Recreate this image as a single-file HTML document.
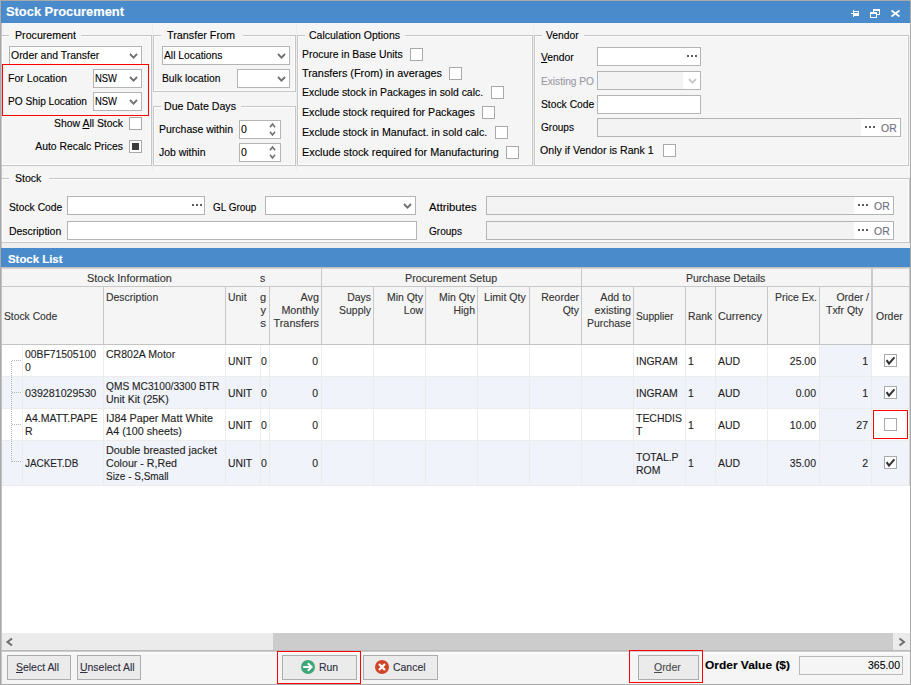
<!DOCTYPE html>
<html><head><meta charset="utf-8"><title>Stock Procurement</title>
<style>
html,body{margin:0;padding:0;width:911px;height:685px;overflow:hidden;background:#f5f5f5;}
body{position:relative;font-family:"Liberation Sans",sans-serif;font-size:11px;color:#000;}
body>div,body>span,body>svg,div>span{position:absolute;box-sizing:border-box;}
.t{white-space:nowrap;-webkit-text-stroke:0.12px currentColor;}
u{text-decoration:underline;text-underline-offset:1px;}
</style></head><body>
<div style="left:0px;top:0px;width:911px;height:685px;background:#f5f5f5;border:1px solid #a9a9a9;"></div>
<div style="left:1px;top:1px;width:1px;height:683px;background:#c4c4c4;"></div>
<div style="left:1px;top:1px;width:909px;height:22px;background:#4a8ccb;"></div>
<span class="t" style="top:5px;font-size:13px;line-height:13px;font-weight:bold;color:#fff;left:6.3px;transform-origin:0 50%;transform:scaleX(0.990);">Stock Procurement</span>
<svg style="left:848px;top:6px" width="60" height="16"><g fill="#fff"><rect x="3" y="7" width="2" height="1"/><rect x="5" y="4" width="1" height="7"/><rect x="6" y="5" width="5" height="5"/></g><rect x="6" y="6" width="4" height="1" fill="#4a8ccb"/><rect x="25" y="3" width="7" height="6" fill="#fff"/><rect x="26" y="5" width="5" height="3" fill="#4a8ccb"/><rect x="22" y="6" width="7" height="6" fill="#fff"/><rect x="23" y="8" width="5" height="3" fill="#4a8ccb"/><path d="M43.5,4.5 L51.5,10.5 M51.5,4.5 L43.5,10.5" stroke="#fff" stroke-width="1.7" fill="none"/></svg>
<div style="left:152px;top:23px;width:1px;height:148px;background:#eeeeee;"></div>
<div style="left:296px;top:23px;width:1px;height:148px;background:#eeeeee;"></div>
<div style="left:533px;top:23px;width:1px;height:148px;background:#eeeeee;"></div>
<div style="left:1px;top:35px;width:151px;height:131px;border:1px solid #c6c6c6;"></div>
<div style="left:2px;top:36px;width:149px;height:129px;border:1px solid #fcfcfc;"></div>
<div style="left:9px;top:32px;width:72px;height:7px;background:#f5f5f5;"></div>
<span class="t" style="top:29px;font-size:11px;line-height:13px;left:15px;transform-origin:0 50%;transform:scaleX(0.968);">Procurement</span>
<div style="left:153px;top:35px;width:143px;height:57px;border:1px solid #c6c6c6;"></div>
<div style="left:154px;top:36px;width:141px;height:55px;border:1px solid #fcfcfc;"></div>
<div style="left:161px;top:32px;width:82px;height:7px;background:#f5f5f5;"></div>
<span class="t" style="top:29px;font-size:11px;line-height:13px;left:167px;transform-origin:0 50%;transform:scaleX(0.982);">Transfer From</span>
<div style="left:153px;top:106px;width:143px;height:60px;border:1px solid #c6c6c6;"></div>
<div style="left:154px;top:107px;width:141px;height:58px;border:1px solid #fcfcfc;"></div>
<div style="left:161px;top:103px;width:80px;height:7px;background:#f5f5f5;"></div>
<span class="t" style="top:100px;font-size:11px;line-height:13px;left:164px;transform-origin:0 50%;transform:scaleX(0.965);">Due Date Days</span>
<div style="left:297px;top:35px;width:236px;height:131px;border:1px solid #c6c6c6;"></div>
<div style="left:298px;top:36px;width:234px;height:129px;border:1px solid #fcfcfc;"></div>
<div style="left:305px;top:32px;width:100px;height:7px;background:#f5f5f5;"></div>
<span class="t" style="top:29px;font-size:11px;line-height:13px;left:309px;transform-origin:0 50%;transform:scaleX(0.954);">Calculation Options</span>
<div style="left:534px;top:35px;width:375px;height:131px;border:1px solid #c6c6c6;"></div>
<div style="left:535px;top:36px;width:373px;height:129px;border:1px solid #fcfcfc;"></div>
<div style="left:542px;top:32px;width:42px;height:7px;background:#f5f5f5;"></div>
<span class="t" style="top:29px;font-size:11px;line-height:13px;left:546px;transform-origin:0 50%;transform:scaleX(0.934);">Vendor</span>
<div style="left:1px;top:178px;width:909px;height:65px;border:1px solid #c6c6c6;"></div>
<div style="left:2px;top:179px;width:907px;height:63px;border:1px solid #fcfcfc;"></div>
<div style="left:9px;top:175px;width:40px;height:7px;background:#f5f5f5;"></div>
<span class="t" style="top:172px;font-size:11px;line-height:13px;left:15px;transform-origin:0 50%;transform:scaleX(0.959);">Stock</span>
<div style="left:9px;top:46px;width:133px;height:19px;border:1px solid #b4b4b4;background:#fff;"></div>
<span class="t" style="top:49px;font-size:11px;line-height:13px;left:11px;transform-origin:0 50%;transform:scaleX(0.950);">Order and Transfer</span>
<svg style="left:129px;top:53px" width="9" height="7"><polyline points="1,1 4.5,4.6 8,1" fill="none" stroke="#6f6f6f" stroke-width="1.8"/></svg>
<span class="t" style="top:72px;font-size:11px;line-height:13px;left:8px;transform-origin:0 50%;transform:scaleX(0.964);">For Location</span>
<div style="left:93px;top:69px;width:49px;height:19px;border:1px solid #b4b4b4;background:#fff;"></div>
<span class="t" style="top:72px;font-size:11px;line-height:13px;left:95px;transform-origin:0 50%;transform:scaleX(0.857);">NSW</span>
<svg style="left:129px;top:76px" width="9" height="7"><polyline points="1,1 4.5,4.6 8,1" fill="none" stroke="#6f6f6f" stroke-width="1.8"/></svg>
<span class="t" style="top:95px;font-size:11px;line-height:13px;left:8px;transform-origin:0 50%;transform:scaleX(0.922);">PO Ship Location</span>
<div style="left:93px;top:92px;width:49px;height:19px;border:1px solid #b4b4b4;background:#fff;"></div>
<span class="t" style="top:95px;font-size:11px;line-height:13px;left:95px;transform-origin:0 50%;transform:scaleX(0.857);">NSW</span>
<svg style="left:129px;top:99px" width="9" height="7"><polyline points="1,1 4.5,4.6 8,1" fill="none" stroke="#6f6f6f" stroke-width="1.8"/></svg>
<div style="left:2px;top:64px;width:147px;height:52px;border:1px solid #ff0000;"></div>
<span class="t" style="top:117px;font-size:11px;line-height:13px;left:-277px;width:400px;text-align:right;transform-origin:100% 50%;transform:scaleX(0.948);">Show <u>A</u>ll Stock</span>
<div style="left:129px;top:117px;width:13px;height:13px;border:1px solid #a9a9a9;background:#fff;"></div>
<span class="t" style="top:140px;font-size:11px;line-height:13px;left:-277px;width:400px;text-align:right;transform-origin:100% 50%;transform:scaleX(0.944);">Auto Recalc Prices</span>
<div style="left:129px;top:140px;width:13px;height:13px;border:1px solid #a9a9a9;background:#fff;"></div>
<div style="left:132px;top:143px;width:7px;height:7px;background:#3c3c3c;"></div>
<div style="left:162px;top:46px;width:128px;height:19px;border:1px solid #b4b4b4;background:#fff;"></div>
<span class="t" style="top:49px;font-size:11px;line-height:13px;left:164px;transform-origin:0 50%;transform:scaleX(0.937);">All Locations</span>
<svg style="left:277px;top:53px" width="9" height="7"><polyline points="1,1 4.5,4.6 8,1" fill="none" stroke="#6f6f6f" stroke-width="1.8"/></svg>
<span class="t" style="top:72px;font-size:11px;line-height:13px;left:162px;transform-origin:0 50%;transform:scaleX(0.937);">Bulk location</span>
<div style="left:237px;top:69px;width:53px;height:19px;border:1px solid #b4b4b4;background:#fff;"></div>
<svg style="left:277px;top:76px" width="9" height="7"><polyline points="1,1 4.5,4.6 8,1" fill="none" stroke="#6f6f6f" stroke-width="1.8"/></svg>
<span class="t" style="top:123px;font-size:11px;line-height:13px;left:159px;transform-origin:0 50%;transform:scaleX(0.953);">Purchase within</span>
<span class="t" style="top:146px;font-size:11px;line-height:13px;left:159px;transform-origin:0 50%;transform:scaleX(0.950);">Job within</span>
<div style="left:239px;top:120px;width:42px;height:19px;border:1px solid #b4b4b4;background:#fff;"></div>
<span class="t" style="top:123px;font-size:11px;line-height:13px;left:241px;transform-origin:0 50%;transform:scaleX(0.950);">0</span>
<svg style="left:268px;top:122px" width="9" height="15"><polyline points="2,5.2 4.5,2 7,5.2" fill="none" stroke="#6f6f6f" stroke-width="1.6"/><polyline points="2,9.8 4.5,13 7,9.8" fill="none" stroke="#6f6f6f" stroke-width="1.6"/></svg>
<div style="left:239px;top:143px;width:42px;height:19px;border:1px solid #b4b4b4;background:#fff;"></div>
<span class="t" style="top:146px;font-size:11px;line-height:13px;left:241px;transform-origin:0 50%;transform:scaleX(0.950);">0</span>
<svg style="left:268px;top:145px" width="9" height="15"><polyline points="2,5.2 4.5,2 7,5.2" fill="none" stroke="#6f6f6f" stroke-width="1.6"/><polyline points="2,9.8 4.5,13 7,9.8" fill="none" stroke="#6f6f6f" stroke-width="1.6"/></svg>
<span class="t" style="top:48px;font-size:11px;line-height:13px;left:302px;transform-origin:0 50%;transform:scaleX(0.946);">Procure in Base Units</span>
<div style="left:410px;top:48px;width:13px;height:13px;border:1px solid #a9a9a9;background:#fff;"></div>
<span class="t" style="top:67px;font-size:11px;line-height:13px;left:302px;transform-origin:0 50%;transform:scaleX(0.985);">Transfers (From) in averages</span>
<div style="left:449px;top:67px;width:13px;height:13px;border:1px solid #a9a9a9;background:#fff;"></div>
<span class="t" style="top:86px;font-size:11px;line-height:13px;left:302px;transform-origin:0 50%;transform:scaleX(0.946);">Exclude stock in Packages in sold calc.</span>
<div style="left:491px;top:86px;width:13px;height:13px;border:1px solid #a9a9a9;background:#fff;"></div>
<span class="t" style="top:106px;font-size:11px;line-height:13px;left:302px;transform-origin:0 50%;transform:scaleX(0.968);">Exclude stock required for Packages</span>
<div style="left:482px;top:106px;width:13px;height:13px;border:1px solid #a9a9a9;background:#fff;"></div>
<span class="t" style="top:126px;font-size:11px;line-height:13px;left:302px;transform-origin:0 50%;transform:scaleX(0.968);">Exclude stock in Manufact. in sold calc.</span>
<div style="left:495px;top:126px;width:13px;height:13px;border:1px solid #a9a9a9;background:#fff;"></div>
<span class="t" style="top:146px;font-size:11px;line-height:13px;left:302px;transform-origin:0 50%;transform:scaleX(0.984);">Exclude stock required for Manufacturing</span>
<div style="left:506px;top:146px;width:13px;height:13px;border:1px solid #a9a9a9;background:#fff;"></div>
<span class="t" style="top:51px;font-size:11px;line-height:13px;left:541px;transform-origin:0 50%;transform:scaleX(0.937);"><u>V</u>endor</span>
<div style="left:597px;top:47px;width:104px;height:19px;border:1px solid #b4b4b4;background:#fff;"></div>
<div style="left:687px;top:55px;width:2px;height:2px;background:#5c5c5c;"></div>
<div style="left:691px;top:55px;width:2px;height:2px;background:#5c5c5c;"></div>
<div style="left:695px;top:55px;width:2px;height:2px;background:#5c5c5c;"></div>
<span class="t" style="top:75px;font-size:11px;line-height:13px;color:#9a9aa4;left:541px;transform-origin:0 50%;transform:scaleX(0.922);">Existing PO</span>
<div style="left:597px;top:71px;width:104px;height:19px;border:1px solid #b4b4b4;background:#f3f3f3;"></div>
<div style="left:683px;top:72px;width:17px;height:17px;background:#fff;"></div>
<svg style="left:688px;top:78px" width="9" height="7"><polyline points="1,1 4.5,4.6 8,1" fill="none" stroke="#c8c8c8" stroke-width="1.8"/></svg>
<span class="t" style="top:98px;font-size:11px;line-height:13px;left:541px;transform-origin:0 50%;transform:scaleX(0.937);">Stock Code</span>
<div style="left:597px;top:95px;width:104px;height:19px;border:1px solid #b4b4b4;background:#fff;"></div>
<span class="t" style="top:121px;font-size:11px;line-height:13px;left:541px;transform-origin:0 50%;transform:scaleX(0.914);">Groups</span>
<div style="left:597px;top:118px;width:304px;height:19px;border:1px solid #b4b4b4;background:#f3f3f3;"></div>
<div style="left:861px;top:119px;width:39px;height:17px;background:#fff;"></div>
<div style="left:865px;top:126px;width:2px;height:2px;background:#5c5c5c;"></div>
<div style="left:869px;top:126px;width:2px;height:2px;background:#5c5c5c;"></div>
<div style="left:873px;top:126px;width:2px;height:2px;background:#5c5c5c;"></div>
<span class="t" style="top:122px;font-size:11px;line-height:13px;color:#6d6d80;left:881px;transform-origin:0 50%;transform:scaleX(0.950);">OR</span>
<span class="t" style="top:144px;font-size:11px;line-height:13px;left:540px;transform-origin:0 50%;transform:scaleX(0.963);">Only if Vendor is Rank 1</span>
<div style="left:663px;top:144px;width:13px;height:13px;border:1px solid #a9a9a9;background:#fff;"></div>
<span class="t" style="top:201px;font-size:11px;line-height:13px;left:9px;transform-origin:0 50%;transform:scaleX(0.937);">Stock Code</span>
<div style="left:67px;top:196px;width:138px;height:19px;border:1px solid #b4b4b4;background:#fff;"></div>
<div style="left:192px;top:204px;width:2px;height:2px;background:#5c5c5c;"></div>
<div style="left:196px;top:204px;width:2px;height:2px;background:#5c5c5c;"></div>
<div style="left:200px;top:204px;width:2px;height:2px;background:#5c5c5c;"></div>
<span class="t" style="top:201px;font-size:11px;line-height:13px;left:213px;transform-origin:0 50%;transform:scaleX(0.905);">GL Group</span>
<div style="left:265px;top:196px;width:151px;height:19px;border:1px solid #b4b4b4;background:#fff;"></div>
<svg style="left:403px;top:203px" width="9" height="7"><polyline points="1,1 4.5,4.6 8,1" fill="none" stroke="#6f6f6f" stroke-width="1.8"/></svg>
<span class="t" style="top:201px;font-size:11px;line-height:13px;left:429px;transform-origin:0 50%;transform:scaleX(1.024);">Attributes</span>
<div style="left:486px;top:196px;width:408px;height:19px;border:1px solid #b4b4b4;background:#f3f3f3;"></div>
<div style="left:854px;top:197px;width:39px;height:17px;background:#fff;"></div>
<div style="left:858px;top:204px;width:2px;height:2px;background:#5c5c5c;"></div>
<div style="left:862px;top:204px;width:2px;height:2px;background:#5c5c5c;"></div>
<div style="left:866px;top:204px;width:2px;height:2px;background:#5c5c5c;"></div>
<span class="t" style="top:200px;font-size:11px;line-height:13px;color:#6d6d80;left:874px;transform-origin:0 50%;transform:scaleX(0.950);">OR</span>
<span class="t" style="top:225px;font-size:11px;line-height:13px;left:9px;transform-origin:0 50%;transform:scaleX(0.949);">Description</span>
<div style="left:67px;top:221px;width:350px;height:19px;border:1px solid #b4b4b4;background:#fff;"></div>
<span class="t" style="top:225px;font-size:11px;line-height:13px;left:429px;transform-origin:0 50%;transform:scaleX(0.914);">Groups</span>
<div style="left:486px;top:221px;width:408px;height:19px;border:1px solid #b4b4b4;background:#f3f3f3;"></div>
<div style="left:854px;top:222px;width:39px;height:17px;background:#fff;"></div>
<div style="left:858px;top:229px;width:2px;height:2px;background:#5c5c5c;"></div>
<div style="left:862px;top:229px;width:2px;height:2px;background:#5c5c5c;"></div>
<div style="left:866px;top:229px;width:2px;height:2px;background:#5c5c5c;"></div>
<span class="t" style="top:225px;font-size:11px;line-height:13px;color:#6d6d80;left:874px;transform-origin:0 50%;transform:scaleX(0.950);">OR</span>
<div style="left:2px;top:243px;width:908px;height:5px;background:#efefef;"></div>
<div style="left:1px;top:248px;width:909px;height:19px;background:#4a8ccb;"></div>
<span class="t" style="top:253px;font-size:11px;line-height:13px;font-weight:bold;color:#fff;left:7.5px;transform-origin:0 50%;transform:scaleX(1.036);">Stock List</span>
<div style="left:1px;top:268px;width:909px;height:77px;background:#f5f5f5;"></div>
<div style="left:1px;top:267px;width:909px;height:1px;background:#c4c1be;"></div>
<div style="left:1px;top:268px;width:909px;height:1px;background:#d4d4d4;"></div>
<div style="left:2px;top:286px;width:908px;height:1px;background:#c8c8c8;"></div>
<div style="left:2px;top:344px;width:908px;height:1px;background:#c4c4c4;"></div>
<div style="left:2px;top:345px;width:908px;height:288px;background:#fff;"></div>
<div style="left:820px;top:345px;width:52px;height:31px;background:#f0f3f9;"></div>
<div style="left:2px;top:376px;width:908px;height:1px;background:#ececec;"></div>
<div style="left:2px;top:377px;width:908px;height:31px;background:#f0f3f9;"></div>
<div style="left:2px;top:408px;width:908px;height:1px;background:#ececec;"></div>
<div style="left:820px;top:409px;width:52px;height:31px;background:#f0f3f9;"></div>
<div style="left:2px;top:440px;width:908px;height:1px;background:#ececec;"></div>
<div style="left:2px;top:441px;width:908px;height:44px;background:#f0f3f9;"></div>
<div style="left:2px;top:485px;width:908px;height:1px;background:#ececec;"></div>
<div style="left:103px;top:287px;width:1px;height:57px;background:#c8c8c8;"></div>
<div style="left:103px;top:345px;width:1px;height:140px;background:#ececec;"></div>
<div style="left:225px;top:287px;width:1px;height:57px;background:#c8c8c8;"></div>
<div style="left:225px;top:345px;width:1px;height:140px;background:#ececec;"></div>
<div style="left:260px;top:345px;width:1px;height:140px;background:#ececec;"></div>
<div style="left:269px;top:287px;width:1px;height:57px;background:#c8c8c8;"></div>
<div style="left:269px;top:345px;width:1px;height:140px;background:#ececec;"></div>
<div style="left:321px;top:287px;width:1px;height:57px;background:#c8c8c8;"></div>
<div style="left:321px;top:345px;width:1px;height:140px;background:#ececec;"></div>
<div style="left:373px;top:287px;width:1px;height:57px;background:#c8c8c8;"></div>
<div style="left:373px;top:345px;width:1px;height:140px;background:#ececec;"></div>
<div style="left:425px;top:287px;width:1px;height:57px;background:#c8c8c8;"></div>
<div style="left:425px;top:345px;width:1px;height:140px;background:#ececec;"></div>
<div style="left:477px;top:287px;width:1px;height:57px;background:#c8c8c8;"></div>
<div style="left:477px;top:345px;width:1px;height:140px;background:#ececec;"></div>
<div style="left:529px;top:287px;width:1px;height:57px;background:#c8c8c8;"></div>
<div style="left:529px;top:345px;width:1px;height:140px;background:#ececec;"></div>
<div style="left:581px;top:287px;width:1px;height:57px;background:#c8c8c8;"></div>
<div style="left:581px;top:345px;width:1px;height:140px;background:#ececec;"></div>
<div style="left:633px;top:287px;width:1px;height:57px;background:#c8c8c8;"></div>
<div style="left:633px;top:345px;width:1px;height:140px;background:#ececec;"></div>
<div style="left:685px;top:287px;width:1px;height:57px;background:#c8c8c8;"></div>
<div style="left:685px;top:345px;width:1px;height:140px;background:#ececec;"></div>
<div style="left:715px;top:287px;width:1px;height:57px;background:#c8c8c8;"></div>
<div style="left:715px;top:345px;width:1px;height:140px;background:#ececec;"></div>
<div style="left:767px;top:287px;width:1px;height:57px;background:#c8c8c8;"></div>
<div style="left:767px;top:345px;width:1px;height:140px;background:#ececec;"></div>
<div style="left:819px;top:287px;width:1px;height:57px;background:#c8c8c8;"></div>
<div style="left:819px;top:345px;width:1px;height:140px;background:#ececec;"></div>
<div style="left:871px;top:287px;width:1px;height:57px;background:#c8c8c8;"></div>
<div style="left:871px;top:345px;width:1px;height:140px;background:#ececec;"></div>
<div style="left:22px;top:345px;width:1px;height:140px;background:#ececec;"></div>
<div style="left:871px;top:268px;width:2px;height:76px;background:#cacaca;"></div>
<div style="left:321px;top:268px;width:1px;height:18px;background:#c8c8c8;"></div>
<div style="left:581px;top:268px;width:1px;height:18px;background:#c8c8c8;"></div>
<div style="left:909px;top:268px;width:1px;height:76px;background:#c8c8c8;"></div>
<div style="left:909px;top:345px;width:1px;height:141px;background:#d8d8d8;"></div>
<div style="left:1px;top:268px;width:1px;height:383px;background:#c4c4c4;"></div>
<span class="t" style="top:272px;font-size:11px;line-height:13px;color:#333;left:87px;transform-origin:0 50%;transform:scaleX(0.992);">Stock Information</span>
<span class="t" style="top:272px;font-size:11px;line-height:13px;color:#333;left:260px;transform-origin:0 50%;transform:scaleX(0.950);">s</span>
<span class="t" style="top:272px;font-size:11px;line-height:13px;color:#333;left:405px;transform-origin:0 50%;transform:scaleX(0.972);">Procurement Setup</span>
<span class="t" style="top:272px;font-size:11px;line-height:13px;color:#333;left:686px;transform-origin:0 50%;transform:scaleX(0.954);">Purchase Details</span>
<span class="t" style="top:310px;font-size:11px;line-height:13px;color:#333;left:4px;transform-origin:0 50%;transform:scaleX(0.937);">Stock Code</span>
<span class="t" style="top:291px;font-size:11px;line-height:13px;color:#333;left:106px;transform-origin:0 50%;transform:scaleX(0.949);">Description</span>
<span class="t" style="top:291px;font-size:11px;line-height:13px;color:#333;left:228px;transform-origin:0 50%;transform:scaleX(0.950);">Unit</span>
<div style="left:260px;top:287px;width:9px;height:57px;overflow:hidden;"><span class="t" style="left:-100px;width:106px;text-align:right;top:4px;line-height:13px;color:#333">g<br>y<br>es</span></div>
<span class="t" style="top:291px;font-size:11px;line-height:13px;color:#333;left:-81px;width:400px;text-align:right;transform-origin:100% 50%;transform:scaleX(0.981);">Avg</span>
<span class="t" style="top:304px;font-size:11px;line-height:13px;color:#333;left:-81px;width:400px;text-align:right;transform-origin:100% 50%;transform:scaleX(0.976);">Monthly</span>
<span class="t" style="top:317px;font-size:11px;line-height:13px;color:#333;left:-81px;width:400px;text-align:right;transform-origin:100% 50%;transform:scaleX(0.988);">Transfers</span>
<span class="t" style="top:291px;font-size:11px;line-height:13px;color:#333;left:-29px;width:400px;text-align:right;transform-origin:100% 50%;transform:scaleX(0.950);">Days</span>
<span class="t" style="top:304px;font-size:11px;line-height:13px;color:#333;left:-29px;width:400px;text-align:right;transform-origin:100% 50%;transform:scaleX(0.950);">Supply</span>
<span class="t" style="top:291px;font-size:11px;line-height:13px;color:#333;left:23px;width:400px;text-align:right;transform-origin:100% 50%;transform:scaleX(0.950);">Min Qty</span>
<span class="t" style="top:304px;font-size:11px;line-height:13px;color:#333;left:23px;width:400px;text-align:right;transform-origin:100% 50%;transform:scaleX(0.950);">Low</span>
<span class="t" style="top:291px;font-size:11px;line-height:13px;color:#333;left:75px;width:400px;text-align:right;transform-origin:100% 50%;transform:scaleX(0.950);">Min Qty</span>
<span class="t" style="top:304px;font-size:11px;line-height:13px;color:#333;left:75px;width:400px;text-align:right;transform-origin:100% 50%;transform:scaleX(0.950);">High</span>
<span class="t" style="top:291px;font-size:11px;line-height:13px;color:#333;left:179px;width:400px;text-align:right;transform-origin:100% 50%;transform:scaleX(0.950);">Reorder</span>
<span class="t" style="top:304px;font-size:11px;line-height:13px;color:#333;left:179px;width:400px;text-align:right;transform-origin:100% 50%;transform:scaleX(0.950);">Qty</span>
<span class="t" style="top:291px;font-size:11px;line-height:13px;color:#333;left:231px;width:400px;text-align:right;transform-origin:100% 50%;transform:scaleX(0.964);">Add to</span>
<span class="t" style="top:304px;font-size:11px;line-height:13px;color:#333;left:231px;width:400px;text-align:right;transform-origin:100% 50%;transform:scaleX(0.976);">existing</span>
<span class="t" style="top:317px;font-size:11px;line-height:13px;color:#333;left:231px;width:400px;text-align:right;transform-origin:100% 50%;transform:scaleX(0.944);">Purchase</span>
<span class="t" style="top:291px;font-size:11px;line-height:13px;color:#333;left:484px;transform-origin:0 50%;transform:scaleX(0.961);">Limit Qty</span>
<span class="t" style="top:310px;font-size:11px;line-height:13px;color:#333;left:636px;transform-origin:0 50%;transform:scaleX(0.926);">Supplier</span>
<span class="t" style="top:310px;font-size:11px;line-height:13px;color:#333;left:688px;transform-origin:0 50%;transform:scaleX(0.942);">Rank</span>
<span class="t" style="top:310px;font-size:11px;line-height:13px;color:#333;left:718px;transform-origin:0 50%;transform:scaleX(0.984);">Currency</span>
<span class="t" style="top:291px;font-size:11px;line-height:13px;color:#333;left:775px;transform-origin:0 50%;transform:scaleX(0.950);">Price Ex.</span>
<span class="t" style="top:291px;font-size:11px;line-height:13px;color:#333;left:469px;width:400px;text-align:right;transform-origin:100% 50%;transform:scaleX(0.950);">Order /</span>
<span class="t" style="top:304px;font-size:11px;line-height:13px;color:#333;left:826px;transform-origin:0 50%;transform:scaleX(0.950);">Txfr Qty</span>
<span class="t" style="top:310px;font-size:11px;line-height:13px;color:#333;left:876px;transform-origin:0 50%;transform:scaleX(0.950);">Order</span>
<svg style="left:0;top:345px" width="24" height="140" shape-rendering="crispEdges"><g stroke="#b4b4b4" stroke-width="1" stroke-dasharray="1,1" fill="none"><path d="M11.5,16 V117 M11.5,15.5 H21 M11.5,47.5 H21 M11.5,79.5 H21 M11.5,116.5 H21"/></g></svg>
<span class="t" style="top:348px;font-size:11px;line-height:13px;color:#1e1e1e;left:25px;transform-origin:0 50%;transform:scaleX(0.943);">00BF71505100</span>
<span class="t" style="top:361px;font-size:11px;line-height:13px;color:#1e1e1e;left:25px;transform-origin:0 50%;transform:scaleX(0.950);">0</span>
<span class="t" style="top:348px;font-size:11px;line-height:13px;color:#1e1e1e;left:105.5px;transform-origin:0 50%;transform:scaleX(0.959);">CR802A Motor</span>
<span class="t" style="top:355px;font-size:11px;line-height:13px;color:#1e1e1e;left:228px;transform-origin:0 50%;transform:scaleX(0.943);">UNIT</span>
<span class="t" style="top:355px;font-size:11px;line-height:13px;color:#1e1e1e;left:261px;transform-origin:0 50%;transform:scaleX(0.950);">0</span>
<span class="t" style="top:355px;font-size:11px;line-height:13px;color:#1e1e1e;left:-82px;width:400px;text-align:right;transform-origin:100% 50%;transform:scaleX(0.950);">0</span>
<span class="t" style="top:355px;font-size:11px;line-height:13px;color:#1e1e1e;left:636px;transform-origin:0 50%;transform:scaleX(0.950);">INGRAM</span>
<span class="t" style="top:355px;font-size:11px;line-height:13px;color:#1e1e1e;left:688px;transform-origin:0 50%;transform:scaleX(0.950);">1</span>
<span class="t" style="top:355px;font-size:11px;line-height:13px;color:#1e1e1e;left:718px;transform-origin:0 50%;transform:scaleX(0.950);">AUD</span>
<span class="t" style="top:355px;font-size:11px;line-height:13px;color:#1e1e1e;left:416px;width:400px;text-align:right;transform-origin:100% 50%;transform:scaleX(0.950);">25.00</span>
<span class="t" style="top:355px;font-size:11px;line-height:13px;color:#1e1e1e;left:468px;width:400px;text-align:right;transform-origin:100% 50%;transform:scaleX(0.950);">1</span>
<div style="left:884px;top:354px;width:13px;height:13px;border:1px solid #a9a9a9;background:#fff;"></div>
<svg style="left:884px;top:354px" width="13" height="13"><polyline points="2.6,6.2 5,9.6 10.4,3.4" fill="none" stroke="#333" stroke-width="2.1"/></svg>
<span class="t" style="top:387px;font-size:11px;line-height:13px;color:#1e1e1e;left:25px;transform-origin:0 50%;transform:scaleX(0.971);">039281029530</span>
<span class="t" style="top:380px;font-size:11px;line-height:13px;color:#1e1e1e;left:105.5px;transform-origin:0 50%;transform:scaleX(0.927);">QMS MC3100/3300 BTR</span>
<span class="t" style="top:393px;font-size:11px;line-height:13px;color:#1e1e1e;left:105.5px;transform-origin:0 50%;transform:scaleX(0.958);">Unit Kit (25K)</span>
<span class="t" style="top:387px;font-size:11px;line-height:13px;color:#1e1e1e;left:228px;transform-origin:0 50%;transform:scaleX(0.943);">UNIT</span>
<span class="t" style="top:387px;font-size:11px;line-height:13px;color:#1e1e1e;left:261px;transform-origin:0 50%;transform:scaleX(0.950);">0</span>
<span class="t" style="top:387px;font-size:11px;line-height:13px;color:#1e1e1e;left:-82px;width:400px;text-align:right;transform-origin:100% 50%;transform:scaleX(0.950);">0</span>
<span class="t" style="top:387px;font-size:11px;line-height:13px;color:#1e1e1e;left:636px;transform-origin:0 50%;transform:scaleX(0.950);">INGRAM</span>
<span class="t" style="top:387px;font-size:11px;line-height:13px;color:#1e1e1e;left:688px;transform-origin:0 50%;transform:scaleX(0.950);">1</span>
<span class="t" style="top:387px;font-size:11px;line-height:13px;color:#1e1e1e;left:718px;transform-origin:0 50%;transform:scaleX(0.950);">AUD</span>
<span class="t" style="top:387px;font-size:11px;line-height:13px;color:#1e1e1e;left:416px;width:400px;text-align:right;transform-origin:100% 50%;transform:scaleX(0.950);">0.00</span>
<span class="t" style="top:387px;font-size:11px;line-height:13px;color:#1e1e1e;left:468px;width:400px;text-align:right;transform-origin:100% 50%;transform:scaleX(0.950);">1</span>
<div style="left:884px;top:386px;width:13px;height:13px;border:1px solid #a9a9a9;background:#fff;"></div>
<svg style="left:884px;top:386px" width="13" height="13"><polyline points="2.6,6.2 5,9.6 10.4,3.4" fill="none" stroke="#333" stroke-width="2.1"/></svg>
<span class="t" style="top:412px;font-size:11px;line-height:13px;color:#1e1e1e;left:25px;transform-origin:0 50%;transform:scaleX(0.953);">A4.MATT.PAPE</span>
<span class="t" style="top:425px;font-size:11px;line-height:13px;color:#1e1e1e;left:25px;transform-origin:0 50%;transform:scaleX(0.950);">R</span>
<span class="t" style="top:412px;font-size:11px;line-height:13px;color:#1e1e1e;left:105.5px;transform-origin:0 50%;transform:scaleX(0.984);">IJ84 Paper Matt White</span>
<span class="t" style="top:425px;font-size:11px;line-height:13px;color:#1e1e1e;left:105.5px;transform-origin:0 50%;transform:scaleX(0.978);">A4 (100 sheets)</span>
<span class="t" style="top:419px;font-size:11px;line-height:13px;color:#1e1e1e;left:228px;transform-origin:0 50%;transform:scaleX(0.943);">UNIT</span>
<span class="t" style="top:419px;font-size:11px;line-height:13px;color:#1e1e1e;left:261px;transform-origin:0 50%;transform:scaleX(0.950);">0</span>
<span class="t" style="top:419px;font-size:11px;line-height:13px;color:#1e1e1e;left:-82px;width:400px;text-align:right;transform-origin:100% 50%;transform:scaleX(0.950);">0</span>
<span class="t" style="top:412px;font-size:11px;line-height:13px;color:#1e1e1e;left:636px;transform-origin:0 50%;transform:scaleX(0.950);">TECHDIS</span>
<span class="t" style="top:425px;font-size:11px;line-height:13px;color:#1e1e1e;left:636px;transform-origin:0 50%;transform:scaleX(0.950);">T</span>
<span class="t" style="top:419px;font-size:11px;line-height:13px;color:#1e1e1e;left:688px;transform-origin:0 50%;transform:scaleX(0.950);">1</span>
<span class="t" style="top:419px;font-size:11px;line-height:13px;color:#1e1e1e;left:718px;transform-origin:0 50%;transform:scaleX(0.950);">AUD</span>
<span class="t" style="top:419px;font-size:11px;line-height:13px;color:#1e1e1e;left:416px;width:400px;text-align:right;transform-origin:100% 50%;transform:scaleX(0.950);">10.00</span>
<span class="t" style="top:419px;font-size:11px;line-height:13px;color:#1e1e1e;left:468px;width:400px;text-align:right;transform-origin:100% 50%;transform:scaleX(0.950);">27</span>
<div style="left:884px;top:418px;width:13px;height:13px;border:1px solid #a9a9a9;background:#fff;"></div>
<span class="t" style="top:457px;font-size:11px;line-height:13px;color:#1e1e1e;left:25px;transform-origin:0 50%;transform:scaleX(0.899);">JACKET.DB</span>
<span class="t" style="top:444px;font-size:11px;line-height:13px;color:#1e1e1e;left:105.5px;transform-origin:0 50%;transform:scaleX(0.986);">Double breasted jacket</span>
<span class="t" style="top:457px;font-size:11px;line-height:13px;color:#1e1e1e;left:105.5px;transform-origin:0 50%;transform:scaleX(0.968);">Colour - R,Red</span>
<span class="t" style="top:470px;font-size:11px;line-height:13px;color:#1e1e1e;left:105.5px;transform-origin:0 50%;transform:scaleX(0.906);">Size - S,Small</span>
<span class="t" style="top:457px;font-size:11px;line-height:13px;color:#1e1e1e;left:228px;transform-origin:0 50%;transform:scaleX(0.943);">UNIT</span>
<span class="t" style="top:457px;font-size:11px;line-height:13px;color:#1e1e1e;left:261px;transform-origin:0 50%;transform:scaleX(0.950);">0</span>
<span class="t" style="top:457px;font-size:11px;line-height:13px;color:#1e1e1e;left:-82px;width:400px;text-align:right;transform-origin:100% 50%;transform:scaleX(0.950);">0</span>
<span class="t" style="top:451px;font-size:11px;line-height:13px;color:#1e1e1e;left:636px;transform-origin:0 50%;transform:scaleX(0.950);">TOTAL.P</span>
<span class="t" style="top:464px;font-size:11px;line-height:13px;color:#1e1e1e;left:636px;transform-origin:0 50%;transform:scaleX(0.950);">ROM</span>
<span class="t" style="top:457px;font-size:11px;line-height:13px;color:#1e1e1e;left:688px;transform-origin:0 50%;transform:scaleX(0.950);">1</span>
<span class="t" style="top:457px;font-size:11px;line-height:13px;color:#1e1e1e;left:718px;transform-origin:0 50%;transform:scaleX(0.950);">AUD</span>
<span class="t" style="top:457px;font-size:11px;line-height:13px;color:#1e1e1e;left:416px;width:400px;text-align:right;transform-origin:100% 50%;transform:scaleX(0.950);">35.00</span>
<span class="t" style="top:457px;font-size:11px;line-height:13px;color:#1e1e1e;left:468px;width:400px;text-align:right;transform-origin:100% 50%;transform:scaleX(0.950);">2</span>
<div style="left:884px;top:456px;width:13px;height:13px;border:1px solid #a9a9a9;background:#fff;"></div>
<svg style="left:884px;top:456px" width="13" height="13"><polyline points="2.6,6.2 5,9.6 10.4,3.4" fill="none" stroke="#333" stroke-width="2.1"/></svg>
<div style="left:873px;top:410px;width:35px;height:29px;border:1px solid #ff0000;"></div>
<div style="left:2px;top:633px;width:908px;height:17px;background:#ebebeb;"></div>
<div style="left:273px;top:633px;width:620px;height:17px;background:#cccccc;"></div>
<svg style="left:4px;top:636px" width="12" height="12"><polyline points="8,2.5 3.5,6 8,9.5" fill="none" stroke="#6e6e6e" stroke-width="2"/></svg>
<svg style="left:896px;top:636px" width="12" height="12"><polyline points="3.5,2.5 8,6 3.5,9.5" fill="none" stroke="#6e6e6e" stroke-width="2"/></svg>
<div style="left:1px;top:650px;width:909px;height:1px;background:#b9b9b9;"></div>
<div style="left:2px;top:651px;width:908px;height:1px;background:#cdcdcd;"></div>
<div style="left:2px;top:652px;width:908px;height:2px;background:#fafafa;"></div>
<div style="left:7px;top:655px;width:64px;height:25px;border:1px solid #adadad;background:#ebebeb;"></div>
<span class="t" style="top:661px;font-size:11px;line-height:13px;color:#2f2f3f;left:16px;transform-origin:0 50%;transform:scaleX(0.950);"><u>S</u>elect All</span>
<div style="left:77px;top:655px;width:64px;height:25px;border:1px solid #adadad;background:#ebebeb;"></div>
<span class="t" style="top:661px;font-size:11px;line-height:13px;color:#2f2f3f;left:80px;transform-origin:0 50%;transform:scaleX(0.950);"><u>U</u>nselect All</span>
<div style="left:282px;top:655px;width:75px;height:25px;border:1px solid #adadad;background:#ebebeb;"></div>
<svg style="left:301px;top:660px" width="14" height="14"><circle cx="7" cy="7" r="7" fill="#3fa679"/><path d="M2.2,7 H10.5 M6.8,3.2 L10.6,7 L6.8,10.8" fill="none" stroke="#fff" stroke-width="2"/></svg>
<span class="t" style="top:661px;font-size:11px;line-height:13px;color:#2f2f3f;left:319px;transform-origin:0 50%;transform:scaleX(0.950);">Run</span>
<div style="left:277px;top:651px;width:84px;height:33px;border:1px solid #ff0000;"></div>
<div style="left:363px;top:655px;width:75px;height:25px;border:1px solid #adadad;background:#ebebeb;"></div>
<svg style="left:375px;top:660px" width="14" height="14"><circle cx="7" cy="7" r="7" fill="#d04526"/><path d="M4,4 L10,10 M10,4 L4,10" fill="none" stroke="#fff" stroke-width="2.2"/></svg>
<span class="t" style="top:661px;font-size:11px;line-height:13px;color:#2f2f3f;left:393px;transform-origin:0 50%;transform:scaleX(0.950);">Cancel</span>
<div style="left:638px;top:655px;width:61px;height:25px;border:1px solid #adadad;background:#ebebeb;"></div>
<span class="t" style="top:661px;font-size:11px;line-height:13px;color:#4a4a4a;left:654px;transform-origin:0 50%;transform:scaleX(0.950);"><u>O</u>rder</span>
<div style="left:629px;top:650px;width:74px;height:33px;border:1px solid #ff0000;"></div>
<span class="t" style="top:659px;font-size:11px;line-height:13px;font-weight:bold;color:#000;left:705px;transform-origin:0 50%;transform:scaleX(1.086);">Order Value ($)</span>
<div style="left:799px;top:656px;width:104px;height:19px;border:1px solid #b9b9b9;background:#f5f5f5;"></div>
<span class="t" style="top:659px;font-size:11px;line-height:13px;color:#000;left:500px;width:400px;text-align:right;transform-origin:100% 50%;transform:scaleX(0.950);">365.00</span>
</body></html>
